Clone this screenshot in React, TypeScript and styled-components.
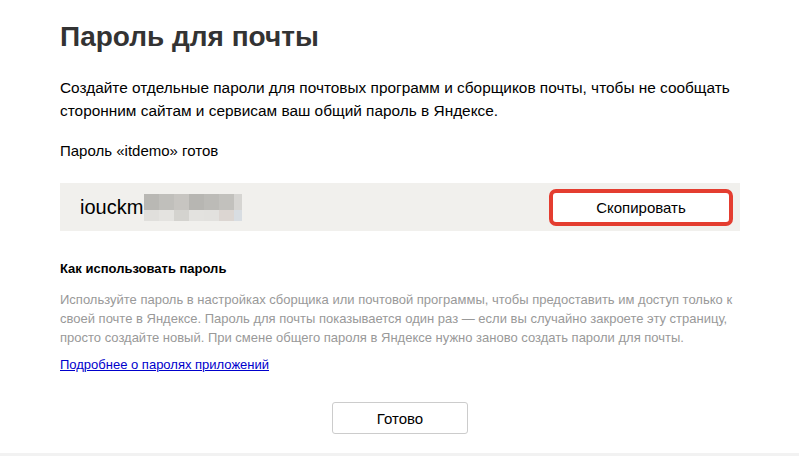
import { FC } from 'react';
import styled, { createGlobalStyle } from 'styled-components';

const GlobalStyle = createGlobalStyle`
  body {
    margin: 0;
    background: #fff;
    font-family: Arial, 'Liberation Sans', sans-serif;
    color: #000;
  }
`;

// pixels of the blurred tail of the password
const blurCells = [
  ['#b9b8b4', '#c0bfbb', '#c7c5c1', '#b7b6b2', '#bcbbb7', '#c2c1bd', '#d6d5d2'],
  ['#e0dfdc', '#e4e3e0', '#d4d3cf', '#e3e2df', '#e2e1de', '#dcd6d2', '#d8dde2'],
];

const App: FC = () => {
  return (
    <>
      <GlobalStyle />
      <Page>
        <Content>
          <Title>Пароль для почты</Title>
          <Lead>
            Создайте отдельные пароли для почтовых программ и сборщиков почты, чтобы не сообщать
            сторонним сайтам и сервисам ваш общий пароль в Яндексе.
          </Lead>
          <Ready>Пароль «itdemo» готов</Ready>
          <PasswordPanel>
            <PasswordText>
              iouckm
              <Blur>
                {blurCells.map((row, r) => (
                  <BlurRow key={r} tall={r === 0}>
                    {row.map((c, i) => (
                      <span key={i} style={{ background: c }} />
                    ))}
                  </BlurRow>
                ))}
              </Blur>
            </PasswordText>
            <CopyButton>Скопировать</CopyButton>
          </PasswordPanel>
          <HowTitle>Как использовать пароль</HowTitle>
          <Hint>
            Используйте пароль в настройках сборщика или почтовой программы, чтобы предоставить им доступ только к
            своей почте в Яндексе. Пароль для почты показывается один раз — если вы случайно закроете эту страницу,
            просто создайте новый. При смене общего пароля в Яндексе нужно заново создать пароли для почты.
          </Hint>
          <MoreLink href="#">Подробнее о паролях приложений</MoreLink>
          <Footer>
            <DoneButton>Готово</DoneButton>
          </Footer>
        </Content>
        <BottomStrip />
      </Page>
    </>
  );
};

export default App;

const Page = styled.div`
  width: 799px;
  height: 456px;
  display: flex;
  flex-direction: column;
  overflow: hidden;
`;

const Content = styled.div`
  flex: 1;
  width: 680px;
  padding: 20px 0 0 60px;
  display: flex;
  flex-direction: column;
`;

const Title = styled.h1`
  margin: 0;
  font-size: 28px;
  line-height: 34px;
  font-weight: bold;
  color: #333;
`;

const Lead = styled.p`
  margin: 22px 0 0;
  font-size: 15.4px;
  line-height: 23px;
  color: #000;
`;

const Ready = styled.p`
  margin: 19px 0 0;
  font-size: 15px;
  line-height: 20px;
`;

const PasswordPanel = styled.div`
  margin-top: 22px;
  height: 48px;
  background: #f1f0ed;
  display: flex;
  align-items: center;
  justify-content: space-between;
  padding: 0 7px 0 20px;
`;

const PasswordText = styled.div`
  display: flex;
  align-items: center;
  font-size: 20px;
  color: #000;
`;

const Blur = styled.div`
  display: flex;
  flex-direction: column;
  margin-left: 1px;
`;

const BlurRow = styled.div<{ tall: boolean }>`
  display: flex;
  height: ${(p) => (p.tall ? 16 : 11)}px;
  span {
    width: 15px;
    height: 100%;
  }
  span:last-child {
    width: 8px;
  }
`;

const CopyButton = styled.button`
  width: 184px;
  height: 37px;
  border: 4px solid #e43d30;
  border-radius: 7px;
  background: #fff;
  font-family: Arial, 'Liberation Sans', sans-serif;
  font-size: 15px;
  color: #000;
  cursor: pointer;
`;

const HowTitle = styled.h3`
  margin: 29px 0 0;
  font-size: 13px;
  line-height: 18px;
  font-weight: bold;
  color: #000;
`;

const Hint = styled.p`
  margin: 12px 0 0;
  font-size: 13px;
  line-height: 19px;
  color: #999;
`;

const MoreLink = styled.a`
  align-self: flex-start;
  margin-top: 9px;
  font-size: 13px;
  line-height: 18px;
  color: #00c;
  text-decoration: underline;
`;

const Footer = styled.div`
  display: flex;
  justify-content: center;
  margin-top: 28px;
`;

const DoneButton = styled.button`
  width: 136px;
  height: 32px;
  border: 1px solid #ccc;
  border-radius: 3px;
  background: #fff;
  font-family: Arial, 'Liberation Sans', sans-serif;
  font-size: 15px;
  color: #000;
  cursor: pointer;
`;

const BottomStrip = styled.div`
  height: 3px;
  background: #f2f2f2;
`;
